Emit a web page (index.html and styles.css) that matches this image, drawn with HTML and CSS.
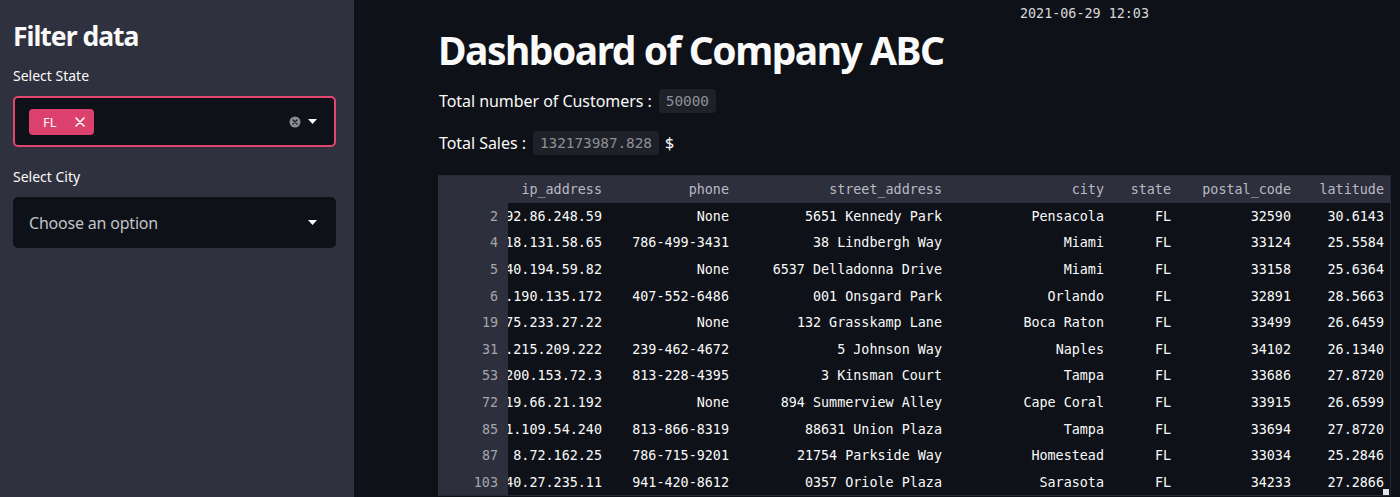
FILE: index.html
```html
<!DOCTYPE html>
<html>
<head>
<meta charset="utf-8">
<link rel="stylesheet" href="styles.css">
</head>
<body>
<div class="app">
  <aside class="sidebar">
    <h2 class="side-title">Filter data</h2>
    <div class="field-label">Select State</div>
    <div class="select select-active">
      <span class="tag">FL
        <svg class="tag-x" width="10" height="10" viewBox="0 0 10 10"><path d="M1 1L9 9M9 1L1 9" stroke="#fff" stroke-width="1.6" stroke-linecap="round"/></svg>
      </span>
      <span class="grow"></span>
      <svg class="clear-icon" width="12" height="12" viewBox="0 0 12 12"><circle cx="6" cy="6" r="5.5" fill="#8d8e93"/><path d="M4 4L8 8M8 4L4 8" stroke="#1c1e25" stroke-width="1.4" stroke-linecap="round"/></svg>
      <svg class="caret" width="9" height="5" viewBox="0 0 9 5"><path d="M0 0H9L4.5 5Z" fill="#fafafa"/></svg>
    </div>
    <div class="field-label">Select City</div>
    <div class="select">
      <span class="placeholder">Choose an option</span>
      <span class="grow"></span>
      <svg class="caret" width="9" height="5" viewBox="0 0 9 5"><path d="M0 0H9L4.5 5Z" fill="#fafafa"/></svg>
    </div>
  </aside>
  <main class="main">
    <div class="content">
      <div class="timestamp">2021-06-29 12:03</div>
      <h1 class="title">Dashboard of Company ABC</h1>
      <p class="stat">Total number of Customers : <code class="pill">50000</code></p>
      <p class="stat stat-2">Total Sales : <code class="pill">132173987.828</code> $</p>
      <div class="table">
        <div class="row head">
          <div class="cell idx"></div>
          <div class="cell"><span>ip_address</span></div>
          <div class="cell"><span>phone</span></div>
          <div class="cell"><span>street_address</span></div>
          <div class="cell"><span>city</span></div>
          <div class="cell"><span>state</span></div>
          <div class="cell"><span>postal_code</span></div>
          <div class="cell"><span>latitude</span></div>
        </div>
        <div class="row"><div class="cell idx"><span>2</span></div><div class="cell"><span>192.86.248.59</span></div><div class="cell"><span>None</span></div><div class="cell"><span>5651 Kennedy Park</span></div><div class="cell"><span>Pensacola</span></div><div class="cell"><span>FL</span></div><div class="cell"><span>32590</span></div><div class="cell"><span>30.6143</span></div></div>
        <div class="row"><div class="cell idx"><span>4</span></div><div class="cell"><span>118.131.58.65</span></div><div class="cell"><span>786-499-3431</span></div><div class="cell"><span>38 Lindbergh Way</span></div><div class="cell"><span>Miami</span></div><div class="cell"><span>FL</span></div><div class="cell"><span>33124</span></div><div class="cell"><span>25.5584</span></div></div>
        <div class="row"><div class="cell idx"><span>5</span></div><div class="cell"><span>140.194.59.82</span></div><div class="cell"><span>None</span></div><div class="cell"><span>6537 Delladonna Drive</span></div><div class="cell"><span>Miami</span></div><div class="cell"><span>FL</span></div><div class="cell"><span>33158</span></div><div class="cell"><span>25.6364</span></div></div>
        <div class="row"><div class="cell idx"><span>6</span></div><div class="cell"><span>21.190.135.172</span></div><div class="cell"><span>407-552-6486</span></div><div class="cell"><span>001 Onsgard Park</span></div><div class="cell"><span>Orlando</span></div><div class="cell"><span>FL</span></div><div class="cell"><span>32891</span></div><div class="cell"><span>28.5663</span></div></div>
        <div class="row"><div class="cell idx"><span>19</span></div><div class="cell"><span>175.233.27.22</span></div><div class="cell"><span>None</span></div><div class="cell"><span>132 Grasskamp Lane</span></div><div class="cell"><span>Boca Raton</span></div><div class="cell"><span>FL</span></div><div class="cell"><span>33499</span></div><div class="cell"><span>26.6459</span></div></div>
        <div class="row"><div class="cell idx"><span>31</span></div><div class="cell"><span>11.215.209.222</span></div><div class="cell"><span>239-462-4672</span></div><div class="cell"><span>5 Johnson Way</span></div><div class="cell"><span>Naples</span></div><div class="cell"><span>FL</span></div><div class="cell"><span>34102</span></div><div class="cell"><span>26.1340</span></div></div>
        <div class="row"><div class="cell idx"><span>53</span></div><div class="cell"><span>200.153.72.3</span></div><div class="cell"><span>813-228-4395</span></div><div class="cell"><span>3 Kinsman Court</span></div><div class="cell"><span>Tampa</span></div><div class="cell"><span>FL</span></div><div class="cell"><span>33686</span></div><div class="cell"><span>27.8720</span></div></div>
        <div class="row"><div class="cell idx"><span>72</span></div><div class="cell"><span>119.66.21.192</span></div><div class="cell"><span>None</span></div><div class="cell"><span>894 Summerview Alley</span></div><div class="cell"><span>Cape Coral</span></div><div class="cell"><span>FL</span></div><div class="cell"><span>33915</span></div><div class="cell"><span>26.6599</span></div></div>
        <div class="row"><div class="cell idx"><span>85</span></div><div class="cell"><span>151.109.54.240</span></div><div class="cell"><span>813-866-8319</span></div><div class="cell"><span>88631 Union Plaza</span></div><div class="cell"><span>Tampa</span></div><div class="cell"><span>FL</span></div><div class="cell"><span>33694</span></div><div class="cell"><span>27.8720</span></div></div>
        <div class="row"><div class="cell idx"><span>87</span></div><div class="cell"><span>8.72.162.25</span></div><div class="cell"><span>786-715-9201</span></div><div class="cell"><span>21754 Parkside Way</span></div><div class="cell"><span>Homestead</span></div><div class="cell"><span>FL</span></div><div class="cell"><span>33034</span></div><div class="cell"><span>25.2846</span></div></div>
        <div class="row"><div class="cell idx"><span>103</span></div><div class="cell"><span>140.27.235.11</span></div><div class="cell"><span>941-420-8612</span></div><div class="cell"><span>0357 Oriole Plaza</span></div><div class="cell"><span>Sarasota</span></div><div class="cell"><span>FL</span></div><div class="cell"><span>34233</span></div><div class="cell"><span>27.2866</span></div></div>
        <div class="resize-handle"></div>
      </div>
    </div>
  </main>
</div>
</body>
</html>
```

FILE: styles.css
```css
* { box-sizing: border-box; }
html, body {
  margin: 0;
  padding: 0;
  background: #0e1117;
  width: 1400px;
  height: 497px;
  overflow: hidden;
}
body {
  font-family: "Noto Sans", "Liberation Sans", sans-serif;
  color: #fafafa;
}
.app {
  display: flex;
  height: 497px;
}
.sidebar {
  width: 354px;
  flex-shrink: 0;
  background: #30313e;
  padding: 20px 18px 0 13px;
  display: flex;
  flex-direction: column;
}
.side-title {
  margin: 0;
  font-size: 26.5px;
  line-height: 32px;
  font-weight: 700;
  letter-spacing: -1px;
  color: #fafafa;
}
.field-label {
  margin-top: 14px;
  font-size: 14px;
  line-height: 20px;
  height: 20px;
  color: #fafafa;
  margin-bottom: 10px;
}
.select + .field-label { margin-top: 20px; }
.select {
  height: 51px;
  border-radius: 5px;
  background: #0e1117;
  border: 2px solid #0e1117;
  display: flex;
  align-items: center;
  padding: 0 17px 0 14px;
}
.select-active { border-color: #e0466f; }
.grow { flex: 1; }
.tag {
  display: inline-flex;
  align-items: center;
  height: 26px;
  width: 65px;
  padding: 0 0 0 14px;
  background: #dc416e;
  border-radius: 4px;
  font-size: 13px;
  color: #fafafa;
}
.tag-x { margin-left: 18px; }
.clear-icon { margin-right: 7px; }
.placeholder {
  font-size: 16px;
  letter-spacing: -0.2px;
  color: #c2c3c8;
}
.main {
  flex: 1;
  padding-left: 84px;
}
.content {
  width: 952px;
  display: flex;
  flex-direction: column;
}
.timestamp {
  margin-top: 5px;
  padding-left: 582px;
  font-family: "DejaVu Sans Mono", monospace;
  font-size: 13.4px;
  line-height: 18px;
  color: #d8d8dc;
}
.title {
  margin: 3px 0 0;
  font-size: 39px;
  line-height: 48px;
  font-weight: 700;
  letter-spacing: -1.5px;
  color: #fafafa;
}
.stat {
  margin: 15px 0 0;
  font-size: 16px;
  line-height: 24px;
  letter-spacing: -0.05px;
  padding-left: 1px;
}
.stat-2 { margin-top: 18px; }
.pill {
  display: inline-block;
  margin-left: 3px;
  margin-right: 2px;
  font-family: "DejaVu Sans Mono", monospace;
  font-size: 14.4px;
  line-height: 24px;
  padding: 0 7px;
  border-radius: 4px;
  background: #1f2129;
  color: #8d8f96;
  vertical-align: top;
}
.table {
  margin-top: 20px;
  position: relative;
  height: 321px;
  width: 953px;
  overflow: hidden;
  border: 1px solid #262833;
  border-left: none;
  font-family: "DejaVu Sans Mono", monospace;
  font-size: 13.4px;
}
.row {
  display: grid;
  grid-template-columns: 70px 102px 127px 213px 162px 67px 120px 93px;
  height: 26.6px;
  color: #fafafa;
}
.row.head {
  height: 27px;
  background: #2d2f3c;
  color: #b9bbc3;
}
.cell {
  display: flex;
  align-items: center;
  justify-content: flex-end;
  overflow: hidden;
  white-space: nowrap;
  padding-right: 8px;
}
.cell span { flex-shrink: 0; }
.cell.idx {
  background: #2d2f3c;
  color: #a4a6ae;
  padding-right: 10px;
}
.resize-handle {
  position: absolute;
  right: 1px;
  bottom: 0;
  width: 6px;
  height: 6px;
  background: #e6e6e6;
}
```
